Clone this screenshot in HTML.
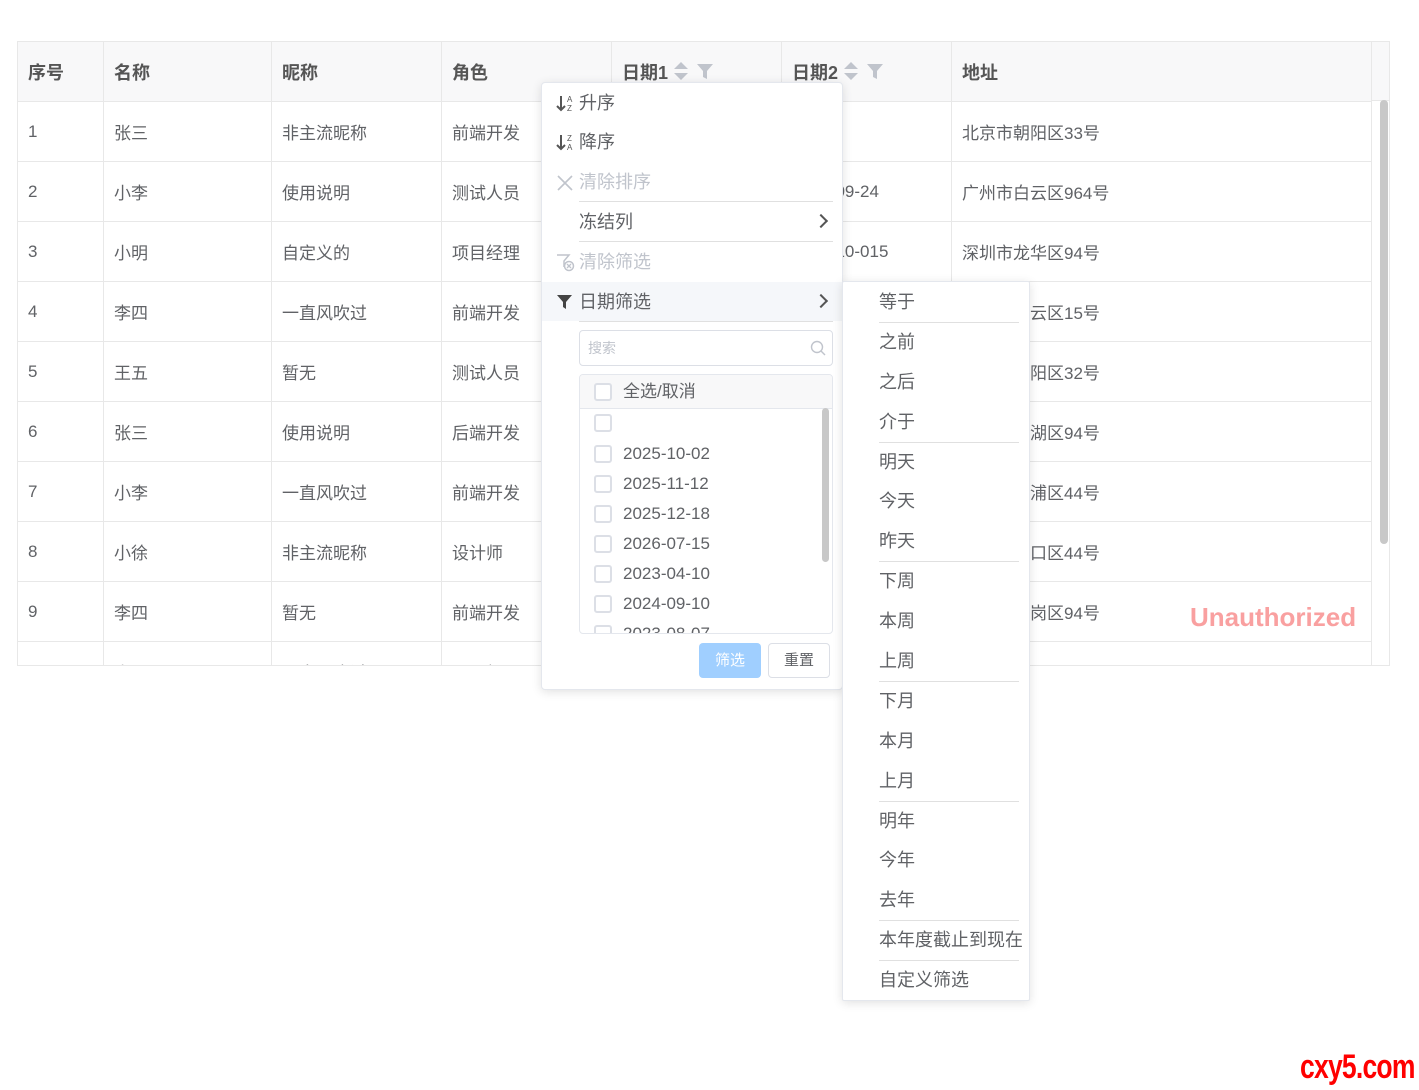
<!DOCTYPE html>
<html><head><meta charset="utf-8"><style>
*{box-sizing:border-box;margin:0;padding:0}
body{width:1419px;height:1090px;background:#fff;position:relative;overflow:hidden;font-family:"Liberation Sans","Noto Sans CJK SC",sans-serif;color:#606266;font-size:17px}
.wrap{position:absolute;left:17px;top:41px;width:1373px;height:625px;border:1px solid #e8e8e8;overflow:hidden}
table{border-collapse:collapse;table-layout:fixed;position:absolute;left:-1px;top:-1px}
td,th{border:1px solid #e8e8e8;height:60px;padding:0 10px;text-align:left;white-space:nowrap;overflow:hidden;font-weight:normal}
th{background:#f8f8f9;font-weight:bold;color:#555;font-size:18px}
.sc{position:absolute;left:1353px;top:-1px;width:20px;height:630px;border-left:1px solid #e8e8e8;background:#fff}
.sc .hd{height:60px;background:#f8f8f9;border-bottom:1px solid #e8e8e8}
.thumb{position:absolute;left:1380px;top:100px;width:8px;height:444px;background:#c8c8c8;border-radius:4px}
.menu{position:absolute;background:#fff;border:1px solid #e4e7ed;box-shadow:0 2px 10px rgba(0,0,0,.12);border-radius:4px}
.mi{position:absolute;left:0;right:0;height:40px;line-height:40px;padding-left:37px;font-size:18px;color:#606266}
.dis{color:#c0c4cc}
.hl{background:#f5f7fa}
.dv{position:absolute;height:1px;background:#e0e0e0}
.ico{position:absolute;left:14px;top:0;font-size:14px}
.arr{position:absolute;right:16px;top:14px;border-right:2px solid #555;border-top:2px solid #555;transform:rotate(45deg);width:10px;height:10px}
.cb{position:absolute;left:14px;width:18px;height:18px;border:2px solid #dcdfe6;border-radius:3px;background:#fff}
.li{position:absolute;left:0;height:30px;line-height:30px;padding-left:43px;font-size:17px;color:#606266}
.sub .mi{padding-left:36px;font-size:18px}
</style></head><body>
<div class="wrap">
<table>
<colgroup><col style="width:86px"><col style="width:168px"><col style="width:170px"><col style="width:170px"><col style="width:170px"><col style="width:170px"><col style="width:421px"></colgroup>
<tr><th>序号</th><th>名称</th><th>昵称</th><th>角色</th><th>日期1</th><th>日期2</th><th>地址</th></tr>
<tr><td>1</td><td>张三</td><td>非主流昵称</td><td>前端开发</td><td></td><td></td><td>北京市朝阳区33号</td></tr>
<tr><td>2</td><td>小李</td><td>使用说明</td><td>测试人员</td><td></td><td>2024-09-24</td><td>广州市白云区964号</td></tr>
<tr><td>3</td><td>小明</td><td>自定义的</td><td>项目经理</td><td></td><td>2024-10-015</td><td>深圳市龙华区94号</td></tr>
<tr><td>4</td><td>李四</td><td>一直风吹过</td><td>前端开发</td><td></td><td></td><td>广州市白云区15号</td></tr>
<tr><td>5</td><td>王五</td><td>暂无</td><td>测试人员</td><td></td><td></td><td>北京市朝阳区32号</td></tr>
<tr><td>6</td><td>张三</td><td>使用说明</td><td>后端开发</td><td></td><td></td><td>杭州市西湖区94号</td></tr>
<tr><td>7</td><td>小李</td><td>一直风吹过</td><td>前端开发</td><td></td><td></td><td>上海市黄浦区44号</td></tr>
<tr><td>8</td><td>小徐</td><td>非主流昵称</td><td>设计师</td><td></td><td></td><td>武汉市江口区44号</td></tr>
<tr><td>9</td><td>李四</td><td>暂无</td><td>前端开发</td><td></td><td></td><td>深圳市龙岗区94号</td></tr>
<tr><td>10</td><td>小王</td><td>一直风吹过</td><td>项目经理</td><td></td><td></td><td>北京市朝阳区44号</td></tr>
</table>
<div class="sc"><div class="hd"></div></div>
</div>
<div class="thumb"></div>
<svg style="position:absolute;left:673px;top:60px" width="46" height="22"><path d="M1 9 L8 2 L15 9Z M1 13 L8 20 L15 13Z" fill="#c0c4cc"/><path d="M24 4 H40 L34 11 V19 L30 17 V11Z" fill="#c0c4cc"/></svg>
<svg style="position:absolute;left:843px;top:60px" width="46" height="22"><path d="M1 9 L8 2 L15 9Z M1 13 L8 20 L15 13Z" fill="#c0c4cc"/><path d="M24 4 H40 L34 11 V19 L30 17 V11Z" fill="#c0c4cc"/></svg>
<div style="position:absolute;left:1190px;top:602px;font-size:26px;font-weight:bold;color:#f9a0a0">Unauthorized</div>

<div class="menu" style="left:541px;top:82px;width:302px;height:608px">
<div class="mi" style="top:0">
<svg class="ico" style="top:11px" width="20" height="20"><path d="M5 2V16 M1 12 L5 16 L9 12" stroke="#555" stroke-width="2" fill="none"/><text x="11" y="8" font-size="8" fill="#555">A</text><text x="11" y="17" font-size="8" fill="#555">Z</text></svg>升序</div>
<div class="mi" style="top:39px">
<svg class="ico" style="top:11px" width="20" height="20"><path d="M5 2V16 M1 12 L5 16 L9 12" stroke="#555" stroke-width="2" fill="none"/><text x="11" y="8" font-size="8" fill="#555">Z</text><text x="11" y="17" font-size="8" fill="#555">A</text></svg>降序</div>
<div class="mi dis" style="top:79px"><svg class="ico" style="top:12px" width="18" height="18"><path d="M2 2L16 16M16 2L2 16" stroke="#c0c4cc" stroke-width="1.6"/></svg>清除排序</div>
<div class="dv" style="left:37px;right:9px;top:118px"></div>
<div class="mi" style="top:119px">冻结列<span class="arr"></span></div>
<div class="dv" style="left:37px;right:9px;top:158px"></div>
<div class="mi dis" style="top:159px"><svg class="ico" style="top:11px" width="20" height="20"><path d="M1 2H13L8 8V14" stroke="#c0c4cc" stroke-width="1.5" fill="none"/><circle cx="13" cy="13" r="4.5" stroke="#c0c4cc" stroke-width="1.5" fill="none"/><path d="M11 11L15 15M15 11L11 15" stroke="#c0c4cc" stroke-width="1.3"/></svg>清除筛选</div>
<div class="mi hl" style="top:199px;height:39px"><svg class="ico" style="top:11px" width="18" height="18"><path d="M1 2H16L10 9V16L7 14V9Z" fill="#444"/></svg>日期筛选<span class="arr"></span></div>
<div class="dv" style="left:37px;right:9px;top:238px"></div>
<div style="position:absolute;left:37px;top:247px;width:254px;height:36px;border:1px solid #dcdfe6;border-radius:4px;font-size:14px;color:#c0c4cc;line-height:34px;padding-left:8px">搜索
<svg style="position:absolute;right:6px;top:9px" width="16" height="16"><circle cx="7" cy="7" r="5.5" stroke="#c0c4cc" stroke-width="1.4" fill="none"/><path d="M11 11L15 15" stroke="#c0c4cc" stroke-width="1.4"/></svg></div>
<div style="position:absolute;left:37px;top:291px;width:254px;height:260px;border:1px solid #e4e7ed;border-radius:4px;overflow:hidden">
<div style="position:absolute;left:0;top:0;width:100%;height:34px;background:#f8f8f9;border-bottom:1px solid #e4e7ed"></div>
<div class="cb" style="top:8px"></div><div class="li" style="top:2px">全选/取消</div>
<div class="cb" style="top:39px"></div>
<div class="cb" style="top:70px"></div><div class="li" style="top:64px">2025-10-02</div>
<div class="cb" style="top:100px"></div><div class="li" style="top:94px">2025-11-12</div>
<div class="cb" style="top:130px"></div><div class="li" style="top:124px">2025-12-18</div>
<div class="cb" style="top:160px"></div><div class="li" style="top:154px">2026-07-15</div>
<div class="cb" style="top:190px"></div><div class="li" style="top:184px">2023-04-10</div>
<div class="cb" style="top:220px"></div><div class="li" style="top:214px">2024-09-10</div>
<div class="cb" style="top:250px"></div><div class="li" style="top:244px">2023-08-07</div>
<div style="position:absolute;left:242px;top:33px;width:7px;height:154px;background:#c8c8c8;border-radius:4px"></div>
</div>
<div style="position:absolute;left:157px;top:560px;width:62px;height:35px;background:#a0cfff;border-radius:4px;color:#fff;font-size:15px;text-align:center;line-height:35px">筛选</div>
<div style="position:absolute;left:226px;top:560px;width:62px;height:35px;border:1px solid #dcdfe6;border-radius:4px;color:#606266;font-size:15px;text-align:center;line-height:33px">重置</div>
</div>

<div class="menu sub" style="left:842px;top:281px;width:188px;height:720px;border-radius:2px">
<div class="mi" style="top:0">等于</div><div class="dv" style="left:36px;right:10px;top:40px"></div>
<div class="mi" style="top:40px">之前</div>
<div class="mi" style="top:80px">之后</div>
<div class="mi" style="top:120px">介于</div><div class="dv" style="left:36px;right:10px;top:160px"></div>
<div class="mi" style="top:160px">明天</div>
<div class="mi" style="top:199px">今天</div>
<div class="mi" style="top:239px">昨天</div><div class="dv" style="left:36px;right:10px;top:279px"></div>
<div class="mi" style="top:279px">下周</div>
<div class="mi" style="top:319px">本周</div>
<div class="mi" style="top:359px">上周</div><div class="dv" style="left:36px;right:10px;top:399px"></div>
<div class="mi" style="top:399px">下月</div>
<div class="mi" style="top:439px">本月</div>
<div class="mi" style="top:479px">上月</div><div class="dv" style="left:36px;right:10px;top:519px"></div>
<div class="mi" style="top:519px">明年</div>
<div class="mi" style="top:558px">今年</div>
<div class="mi" style="top:598px">去年</div><div class="dv" style="left:36px;right:10px;top:638px"></div>
<div class="mi" style="top:638px">本年度截止到现在</div><div class="dv" style="left:36px;right:10px;top:678px"></div>
<div class="mi" style="top:678px">自定义筛选</div>
</div>
<div style="position:absolute;left:1300px;top:1048px;font-size:34px;font-weight:bold;color:#ff0000;font-family:'Liberation Sans Narrow','Liberation Sans',sans-serif;transform:scaleX(.78);transform-origin:left;letter-spacing:-1px">cxy5.com</div>
</body></html>
